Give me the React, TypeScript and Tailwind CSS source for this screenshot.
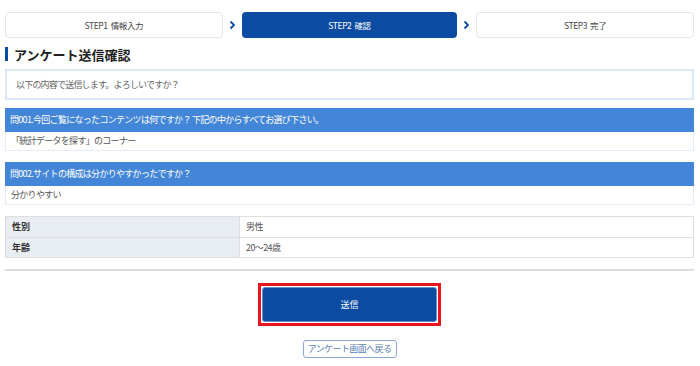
const font = { fontFamily: '"Noto Sans CJK JP", "Noto Sans", sans-serif' };

function Chevron() {
  return (
    <div className="flex w-[19px] shrink-0 items-center justify-center">
      <svg width="7" height="10" viewBox="0 0 7 10" fill="none">
        <path d="M1.5 1.5 L5 5 L1.5 8.5" stroke="#0b4ba1" strokeWidth="1.8" />
      </svg>
    </div>
  );
}

function Step({ label, active }: { label: string; active?: boolean }) {
  return (
    <div
      className={
        active
          ? "flex h-[26px] flex-1 items-center justify-center whitespace-pre rounded-[4px] bg-[#0b4ba1] text-[8.5px] tracking-[-0.4px] text-white"
          : "flex h-[26px] flex-1 items-center justify-center whitespace-pre rounded-[4px] border border-[#e6e6e6] bg-white text-[8.5px] tracking-[-0.4px] text-[#444]"
      }
    >
      {label}
    </div>
  );
}

function Question({ q, a, className }: { q: string; a: string; className: string }) {
  return (
    <div className={className}>
      <div className="flex h-[24px] items-center bg-[#4386d7] pl-[5px] text-[9px] tracking-[-0.7px] text-white">{q}</div>
      <div className="flex h-[19px] items-center border border-t-0 border-[#e3ebf6] pl-[5px] text-[9px] tracking-[-0.7px] text-[#555]">
        {a}
      </div>
    </div>
  );
}

export default function App() {
  const rows = [
    { k: "性別", v: "男性" },
    { k: "年齢", v: "20〜24歳" },
  ];

  return (
    <div style={font} className="h-[366px] w-[700px] overflow-hidden bg-white pl-[5px] pr-[6px] pt-[12px]">
      <div className="flex items-center">
        <Step label="STEP1  情報入力" />
        <Chevron />
        <Step label="STEP2  確認" active />
        <Chevron />
        <Step label="STEP3  完了" />
      </div>

      <h1 className="mt-[9px] flex h-[14px] items-center border-l-[3px] border-[#0b4ba1] pl-[6px] text-[13px] font-bold leading-none text-[#222]">
        アンケート送信確認
      </h1>

      <div className="mt-[8px] flex h-[31px] items-center border-2 border-[#dce8f7] pl-[9px] text-[9px] tracking-[-0.8px] text-[#666]">
        以下の内容で送信します。よろしいですか？
      </div>

      <Question
        className="mt-[8px]"
        q="問001.今回ご覧になったコンテンツは何ですか？ 下記の中からすべてお選び下さい。"
        a="「統計データを探す」のコーナー"
      />
      <Question className="mt-[11px]" q="問002.サイトの構成は分かりやすかったですか？" a="分かりやすい" />

      <div className="mt-[11px] border border-[#dedede]">
        {rows.map((r, i) => (
          <div key={r.k} className={i > 0 ? "flex h-[20px] border-t border-[#dedede]" : "flex h-[20px]"}>
            <div className="flex w-[234px] items-center border-r border-[#dedede] bg-[#e9eef5] pl-[6px] text-[9px] font-bold text-[#333]">
              {r.k}
            </div>
            <div className="flex flex-1 items-center pl-[6px] text-[9px] tracking-[-0.6px] text-[#555]">{r.v}</div>
          </div>
        ))}
      </div>

      <div className="mt-[11px] border-t-2 border-[#dddddd]" />

      <div className="mt-[12px] flex justify-center">
        <div className="border-[3px] border-[#e8141e] bg-white p-[1px]">
          <button className="flex h-[35px] w-[175px] items-center justify-center rounded-[3px] border border-[#6b8fc9] bg-[#0b4ba1] text-[9px] text-white">
            送信
          </button>
        </div>
      </div>

      <div className="mt-[14px] flex justify-center">
        <button className="flex h-[18px] w-[94px] items-center justify-center whitespace-nowrap rounded-[3px] border border-[#8aa9d8] bg-white text-[9px] tracking-[-0.6px] text-[#5a7fb3]">
          アンケート画面へ戻る
        </button>
      </div>
    </div>
  );
}
